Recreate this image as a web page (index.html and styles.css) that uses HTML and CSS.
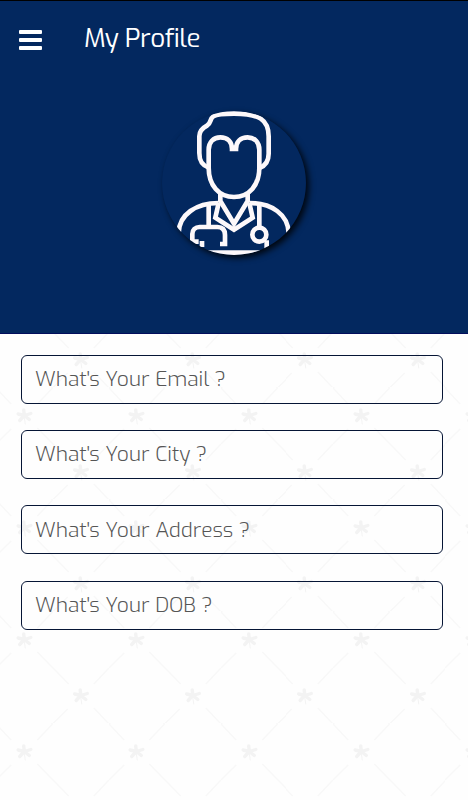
FILE: index.html
```html
<!DOCTYPE html>
<html lang="en">
<head>
    <meta charset="UTF-8">
    <meta name="viewport" content="width=device-width, initial-scale=1.0">
    <title>My Profile</title>
    <link rel="stylesheet" href="styles.css">
</head>
<body>
    <header>
        <div class="toolbar">
            <button class="menu-btn" aria-label="Menu">
                <span></span>
                <span></span>
                <span></span>
            </button>
            <h1>My Profile</h1>
        </div>
        <div class="avatar">
            <svg viewBox="36 32 432 432" fill="none" stroke="#fdf8fa" stroke-width="14">
                <!-- Hair -->
                <path d="M176 202C155 194 148 181 148 158V108C148 92 158 83 171 76C184 69 178 56 190 48C202 40 224 40 252 40C285 40 312 42 332 55C350 67 356 82 356 108V160C356 184 347 196 328 203" />
                <!-- Face -->
                <path d="M246 153V146C246 124 232 111 211 111C190 111 176 126 176 148V202C176 255 207 290 252 290C297 290 328 255 328 202V148C328 126 314 111 293 111C272 111 258 124 258 146V153" />
                <!-- Neck and collar -->
                <path d="M211 278V302L252 370L293 302V278" />
                <path d="M206 308L196 352L252 388L308 352L298 308" />
                <!-- Shoulders -->
                <path d="M86 398C87 342 139 308 206 308M298 308C365 308 414 342 416 398" />
                <!-- Stethoscope -->
                <path d="M176 312V378M127 424V401C127 388 136 380 149 380H202C218 380 225 389 225 404V431H210M156 422V440M127 424H146" />
                <path d="M328 312V382M350 420V446" />
                <circle cx="328" cy="403" r="21" />
                <path d="M140 457H364" stroke-width="15" />
            </svg>
        </div>
    </header>
    <main>
        <form class="profile-form">
            <input type="email" placeholder="What's Your Email ?">
            <input type="text" placeholder="What's Your City ?">
            <input type="text" placeholder="What's Your Address ?">
            <input type="text" placeholder="What's Your DOB ?">
        </form>
    </main>
</body>
</html>
```
FILE: styles.css
```css
* {
    box-sizing: border-box;
}

body {
    margin: 0;
    min-height: 100vh;
    font-family: Exo, Roboto, sans-serif;
    background-color: #fefefe;
    /* Diamond lines with small flowers */
    background-image: url("data:image/svg+xml,%3Csvg xmlns='http://www.w3.org/2000/svg' xmlns:xlink='http://www.w3.org/1999/xlink' viewBox='0 0 112 112' preserveAspectRatio='none'%3E%3Cpath d='M41 40L72 72M97 96L112 112M0 0L15 16M41 16L56 0M56 112L71 97M15 41L0 56M97 72L112 56' fill='none' stroke='%23f8f8f8' stroke-width='1.4'/%3E%3Cg id='f' fill='none' stroke='%23f3f3f3' stroke-width='3.4' stroke-linecap='round'%3E%3Cpath d='M28 27.5L27.5 22M28 27.5L22 26M28 27.5L34.5 25.5M28 27.5L23.5 32.5M28 27.5L33 31.5'/%3E%3Cpath d='M28 29L29 36' stroke-width='1'/%3E%3C/g%3E%3Cuse xlink:href='%23f' x='56' y='56'/%3E%3C/svg%3E");
    background-size: 112.3px 112px;
    background-position: -3.7px 51.5px;
}

header {
    height: 333.5px;
    background-color: #03285f;
    border-top: 1px solid #000;
    border-bottom: 1px solid #020e5c;
}

.toolbar {
    display: flex;
    align-items: center;
    height: 76px;
    padding-left: 19px;
}

.menu-btn {
    display: flex;
    flex-direction: column;
    gap: 3.5px;
    width: 23px;
    margin-top: 2px;
    padding: 0;
    border: none;
    background: none;
    cursor: pointer;
}

.menu-btn span {
    height: 4.2px;
    border-radius: 1px;
    background-color: #fff;
}

h1 {
    margin: 0 0 2px 42px;
    color: #fff;
    font-size: 26px;
    font-weight: 400;
    letter-spacing: -0.5px;
}

.avatar {
    width: 144px;
    height: 144px;
    margin: 34px auto 0;
    border-radius: 50%;
    background-color: #03285f;
    box-shadow: 3px 3px 6px rgba(0, 0, 0, 0.85);
    overflow: hidden;
}

.avatar svg {
    display: block;
    width: 100%;
    height: 100%;
}

.profile-form {
    display: flex;
    flex-direction: column;
    gap: 26.4px;
    padding: 21px 25px 0 21px;
}

.profile-form input {
    width: 100%;
    height: 49px;
    padding: 0 13px;
    border: 1px solid #061535;
    border-radius: 6px;
    background: transparent;
    font-family: inherit;
    font-size: 21px;
    font-weight: 300;
    letter-spacing: -0.08px;
}

.profile-form input::placeholder {
    color: #555;
}
```
